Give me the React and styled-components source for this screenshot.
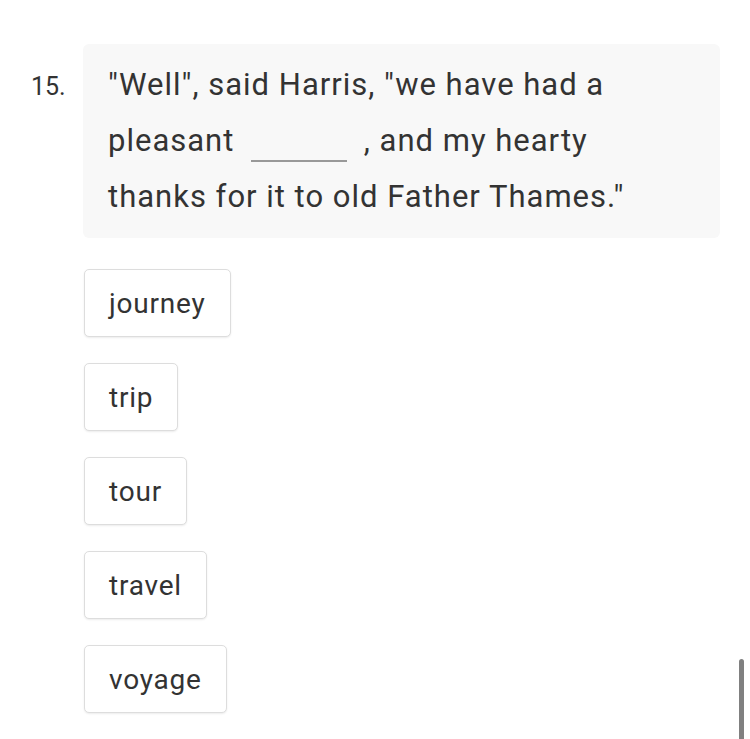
import React from 'react';
import styled, { createGlobalStyle } from 'styled-components';

const GlobalStyle = createGlobalStyle`
  html, body {
    margin: 0;
    padding: 0;
    background: #ffffff;
  }
  body {
    font-family: Roboto, "Noto Sans", sans-serif;
    color: #333333;
  }
`;

const Page = styled.div`
  padding: 44px 30px 0 31px;
  height: 739px;
  box-sizing: border-box;
  overflow: hidden;
`;

const QuestionRow = styled.div`
  display: flex;
  align-items: baseline;
`;

const Number = styled.span`
  width: 52px;
  flex-shrink: 0;
  font-size: 25px;
  color: #333333;
`;

const Prompt = styled.div`
  flex: 1;
  background: #f8f8f8;
  border-radius: 6px;
  padding: 13px 60px 13px 25px;
  font-size: 31px;
  letter-spacing: 1px;
  line-height: 56px;
  color: #333333;
`;

const Blank = styled.span`
  display: inline-block;
  width: 96px;
  margin: 0 8px;
  border-bottom: 2px solid #999999;
  vertical-align: -11px;
`;

const Options = styled.div`
  display: flex;
  flex-direction: column;
  align-items: flex-start;
  gap: 26px;
  margin: 31px 0 0 53px;
`;

const Option = styled.button`
  height: 68px;
  padding: 0 24px;
  background: #ffffff;
  border: 1px solid #dddddd;
  border-radius: 5px;
  box-shadow: 0 1px 2px rgba(0, 0, 0, 0.08);
  font-family: Roboto, "Noto Sans", sans-serif;
  font-size: 28px;
  letter-spacing: 0.8px;
  color: #333333;
  cursor: pointer;
`;

const ScrollThumb = styled.div`
  position: fixed;
  right: 6px;
  top: 659px;
  width: 5px;
  height: 90px;
  border-radius: 3px 3px 0 0;
  background: #808080;
`;

const options = ['journey', 'trip', 'tour', 'travel', 'voyage'];

const App = () => (
  <>
    <GlobalStyle />
    <Page>
      <QuestionRow>
        <Number>15.</Number>
        <Prompt>
          "Well", said Harris, "we have had a pleasant <Blank /> , and my hearty thanks for it to old Father Thames."
        </Prompt>
      </QuestionRow>
      <Options>
        {options.map((o) => (
          <Option key={o}>{o}</Option>
        ))}
      </Options>
    </Page>
    <ScrollThumb />
  </>
);

export default App;
